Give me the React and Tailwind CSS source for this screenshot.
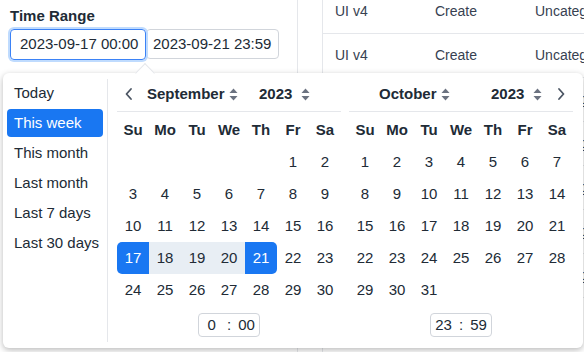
import React from "react";

const FONT = { fontFamily: "'Liberation Sans', Arial, sans-serif" };

const PRESETS = ["Today", "This week", "This month", "Last month", "Last 7 days", "Last 30 days"];
const WEEK = ["Su", "Mo", "Tu", "We", "Th", "Fr", "Sa"];

const SEPT = [
  [null, null, null, null, null, 1, 2],
  [3, 4, 5, 6, 7, 8, 9],
  [10, 11, 12, 13, 14, 15, 16],
  [17, 18, 19, 20, 21, 22, 23],
  [24, 25, 26, 27, 28, 29, 30],
];

const OCT = [
  [1, 2, 3, 4, 5, 6, 7],
  [8, 9, 10, 11, 12, 13, 14],
  [15, 16, 17, 18, 19, 20, 21],
  [22, 23, 24, 25, 26, 27, 28],
  [29, 30, 31, null, null, null, null],
];

const Spinner = () => (
  <svg width="9" height="13" viewBox="0 0 9 13" className="shrink-0">
    <path d="M4.5 0.5 L8.5 5 H0.5 Z" fill="#6b7280" />
    <path d="M4.5 12.5 L8.5 8 H0.5 Z" fill="#6b7280" />
  </svg>
);

const Chevron = ({ dir }) => (
  <svg width="10" height="14" viewBox="0 0 10 14">
    <path
      d={dir === "left" ? "M7 2 L2.5 7 L7 12" : "M3 2 L7.5 7 L3 12"}
      fill="none"
      stroke="#4b5563"
      strokeWidth="1.8"
      strokeLinecap="round"
      strokeLinejoin="round"
    />
  </svg>
);

const Calendar = ({ month, weeks, prev, next, range, time }) => {
  // range: { start, end } for highlighted selection in this month
  const dayClass = (d) => {
    if (!range || d == null) return "";
    if (d === range.start) return "bg-[#1977f2] text-white rounded-l-[5px]";
    if (d === range.end) return "bg-[#1977f2] text-white rounded-r-[5px]";
    if (d > range.start && d < range.end) return "bg-[#e8eef4]";
    return "";
  };

  return (
    <div className="w-[224px] flex flex-col">
      <div className="h-[35px] flex items-center border-b border-[#e5e7eb]">
        <div className="w-[24px] flex justify-center">{prev && <Chevron dir="left" />}</div>
        <div className="w-[106px] ml-[6px] flex items-center gap-[4px] font-bold text-[15px]">
          {month}
          <Spinner />
        </div>
        <div className="ml-[6px] flex items-center gap-[9px] font-bold text-[15px]">
          2023
          <Spinner />
        </div>
        <div className="flex-1" />
        <div className="w-[24px] flex justify-center">{next && <Chevron dir="right" />}</div>
      </div>
      <div className="grid grid-cols-7 mt-[2px]">
        {WEEK.map((w) => (
          <div key={w} className="h-[32px] flex items-center justify-center font-bold text-[15px]">
            {w}
          </div>
        ))}
        {weeks.flat().map((d, i) => (
          <div key={i} className={`h-[32px] flex items-center justify-center text-[15px] ${dayClass(d)}`}>
            {d}
          </div>
        ))}
      </div>
      <div className="flex justify-center mt-[7px]">
        <div className="h-[24px] px-[4px] flex items-center gap-[7px] border border-[#d1d5db] rounded-[4px] text-[15px]">
          <span className="w-[17px] text-center">{time[0]}</span>
          <span>:</span>
          <span>{time[1]}</span>
        </div>
      </div>
    </div>
  );
};

const App = () => {
  return (
    <div className="relative w-[584px] h-[352px] overflow-hidden bg-white text-[#212b36]" style={FONT}>
      {/* page behind the picker */}
      <div className="flex h-full">
        <div className="w-[298px] shrink-0 border-r border-[#e5e7eb] pl-[10px] pt-[6px]">
          <p className="text-[15px] font-bold leading-[20px]">Time Range</p>
          <div className="flex mt-[3px] whitespace-nowrap">
            <div className="relative z-10 w-[136px] h-[31px] flex items-center px-[9px] border border-[#3b82f6] rounded-[4px] ring-[2px] ring-[#bfdbfe] text-[15px]">
              2023-09-17 00:00
            </div>
            <div className="w-[133px] h-[30px] flex items-center px-[6px] border border-[#d1d5db] rounded-[4px] text-[15px]">
              2023-09-21 23:59
            </div>
          </div>
          <p className="mt-[10px] text-[15px] font-bold leading-[20px]">Status</p>
        </div>
        <div className="w-[25px] shrink-0 border-r border-[#e5e7eb]" />
        <div className="flex-1 min-w-0 overflow-hidden text-[14px] text-[#374151]">
          {[0, 1, 2, 3, 4, 5, 6].map((r) => (
            <div
              key={r}
              className={`flex items-center h-[44px] border-b border-[#e5e7eb] pl-[12px] whitespace-nowrap ${r === 0 ? "mt-[-10px]" : ""}`}
            >
              <span className="w-[100px] shrink-0">UI v4</span>
              <span className="w-[100px] shrink-0">Create</span>
              <span>Uncategorized</span>
            </div>
          ))}
        </div>
      </div>

      {/* date range popover */}
      <div className="absolute left-[3px] top-[73px] w-[580px] h-[275px] bg-white rounded-[6px] shadow-[0_2px_6px_rgba(0,0,0,0.28)]">
        <div className="absolute left-[135px] top-[-7px] w-[14px] h-[14px] bg-white rotate-45 border-l border-t border-[#e5e7eb]" />
        <div className="relative flex h-full">
          <div className="w-[105px] my-[6px] border-r border-[#e5e7eb] px-[4px] flex flex-col gap-[2px]">
            {PRESETS.map((p) => (
              <div
                key={p}
                className={`h-[28px] flex items-center px-[7px] rounded-[4px] text-[15px] whitespace-nowrap ${
                  p === "This week" ? "bg-[#1977f2] text-white" : ""
                }`}
              >
                {p}
              </div>
            ))}
          </div>
          <div className="flex gap-[8px] pl-[9px] pt-[4px]">
            <Calendar month="September" weeks={SEPT} prev range={{ start: 17, end: 21 }} time={["0", "00"]} />
            <Calendar month="October" weeks={OCT} next time={["23", "59"]} />
          </div>
        </div>
      </div>
    </div>
  );
};

export default App;
